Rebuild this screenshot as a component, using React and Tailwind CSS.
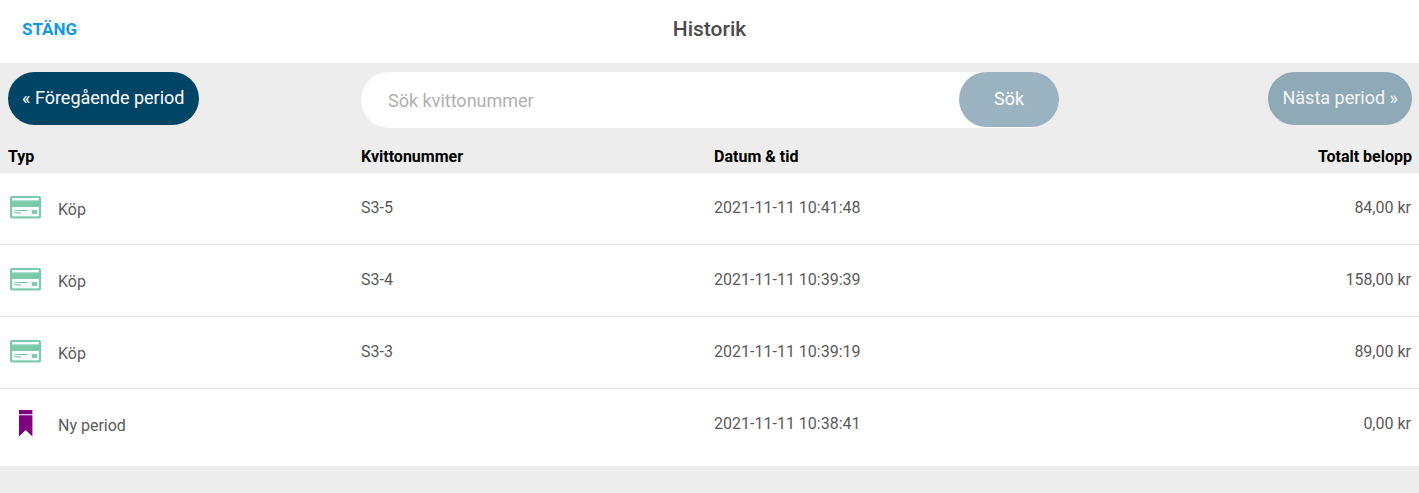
const rows = [
  { type: 'Köp', receipt: 'S3-5', date: '2021-11-11 10:41:48', total: '84,00 kr' },
  { type: 'Köp', receipt: 'S3-4', date: '2021-11-11 10:39:39', total: '158,00 kr' },
  { type: 'Köp', receipt: 'S3-3', date: '2021-11-11 10:39:19', total: '89,00 kr' },
  { type: 'Ny period', receipt: '', date: '2021-11-11 10:38:41', total: '0,00 kr' },
];

function CardIcon() {
  return (
    <svg className="h-6 w-8" viewBox="0 0 32 24" aria-hidden="true">
      <rect x="0" y="1" width="31" height="22.5" rx="1.8" fill="#7bcbaa" />
      <rect x="2.2" y="3" width="26.6" height="2.4" fill="#fff" />
      <rect x="2.2" y="12" width="26.6" height="9.3" fill="#fff" />
      <path d="M4.5 15.5h13.5M4.5 17.9h6.5" stroke="#7bcbaa" strokeWidth="1.1" />
      <rect x="22" y="15" width="5" height="3.8" fill="#7bcbaa" />
    </svg>
  );
}

function BookmarkIcon() {
  return (
    <svg className="h-7 w-8" viewBox="0 0 32 28" aria-hidden="true">
      <path d="M9 1h13.4v4.2H9zM9 6.3h13.4v21.2L15.7 21L9 27.5z" fill="#800080" />
    </svg>
  );
}

export default function App() {
  return (
    <div className="min-h-screen bg-[#ededed] font-['Roboto',sans-serif] text-[#5a5a5a]">
      <header className="grid h-[63px] grid-cols-[1fr_auto_1fr] items-center bg-white px-[22px] pb-1">
        <button type="button" className="justify-self-start text-[17px] font-bold text-[#1199e2]">STÄNG</button>
        <h1 className="text-[21px] font-medium text-[#4a4a4a]">Historik</h1>
      </header>
      <main>
        <div className="grid grid-cols-4 items-start pt-[9px] pr-[7px]">
          <div className="pl-2">
            <button type="button" className="h-[53px] rounded-[27px] bg-[#004466] px-[14px] pb-0.5 text-lg text-white">« Föregående period</button>
          </div>
          <form className="col-span-2 ml-2 flex h-14 items-start rounded-[28px] bg-white" onSubmit={(e) => e.preventDefault()}>
            <input
              type="text"
              aria-label="Sök kvittonummer"
              placeholder="Sök kvittonummer"
              className="h-full min-w-0 flex-1 rounded-l-[28px] pl-[27px] text-lg outline-none placeholder:text-[#b0b0b0]"
            />
            <button type="submit" className="h-[55px] w-[100px] rounded-[28px] bg-[#9bb2c0] pb-0.5 text-lg text-white">Sök</button>
          </form>
          <div className="text-right">
            <button type="button" disabled className="h-[53px] rounded-[27px] bg-[#90a9b7] px-[14px] pb-0.5 text-lg text-[#f4f6f8]">Nästa period »</button>
          </div>
        </div>
        <table className="w-full table-fixed border-collapse text-base">
          <colgroup>
            <col className="w-[24.88%]" />
            <col className="w-[24.88%]" />
            <col className="w-[24.88%]" />
            <col />
          </colgroup>
          <thead>
            <tr className="h-[45px] text-left text-black">
              <th className="pt-3 pl-2 font-bold">Typ</th>
              <th className="pt-3 pl-2 font-bold">Kvittonummer</th>
              <th className="pt-3 pl-2 font-bold">Datum &amp; tid</th>
              <th className="pt-3 pr-[7px] text-right font-bold">Totalt belopp</th>
            </tr>
          </thead>
          <tbody className="bg-white">
            {rows.map((row) => (
              <tr
                key={row.date}
                className="group h-[72px] border-b border-[#e2e2e2] first:h-[71px] last:h-[78px] last:border-0"
              >
                <td className="pb-0.5 pl-[10px] group-last:pb-2">
                  <div className="flex items-center gap-4">
                    {row.receipt ? <CardIcon /> : <BookmarkIcon />}
                    <span className="pt-1.5">{row.type}</span>
                  </div>
                </td>
                <td className="pl-2 group-last:pb-1.5">{row.receipt}</td>
                <td className="pl-2 group-last:pb-1.5">{row.date}</td>
                <td className="pr-2 text-right group-last:pb-1.5">{row.total}</td>
              </tr>
            ))}
          </tbody>
        </table>
      </main>
    </div>
  );
}
